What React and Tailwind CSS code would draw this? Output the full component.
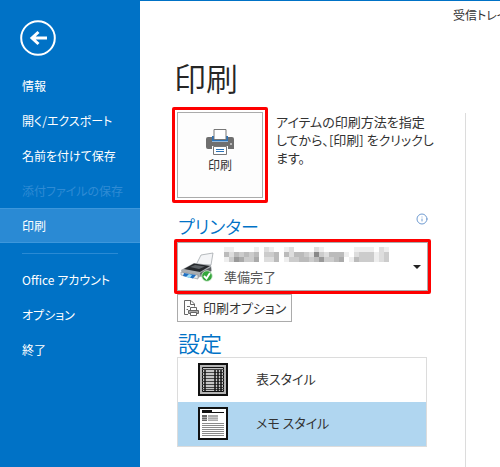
import React, { useState } from 'react';
import { Info } from 'lucide-react';

// --- DATA ---
const MAIN_ITEMS = [
  { id: 'info', label: '情報' },
  { id: 'open', label: '開く/エクスポート' },
  { id: 'save-as', label: '名前を付けて保存' },
  { id: 'save-attachments', label: '添付ファイルの保存', disabled: true },
  { id: 'print', label: '印刷' },
];

const APP_ITEMS = [
  { id: 'account', label: 'Office アカウント' },
  { id: 'options', label: 'オプション' },
  { id: 'exit', label: '終了' },
];

// Grey level of every tile that hides the printer name (hex digit, f = white)
const MOSAIC = [
  'eeffffefdeffedffffdeffffffeeeefde',
  'bdbcbcbfccbfbdbbcd8cdbbbefdcccedc',
  'ec9accafddbfeccbbcb9ccbafebcccedc',
];

// --- ICONS ---
const BackIcon = () => (
  <svg viewBox="0 0 36 36" className="size-9" fill="none" stroke="white" aria-hidden="true">
    <circle cx="18" cy="18" r="16.8" strokeWidth="2" />
    <path d="M27 18H12M18.500 12L12 18L18.500 24" strokeWidth="3" />
  </svg>
);

const PrinterIcon = () => (
  <svg viewBox="0 0 28 26" className="w-7 h-[26px]" aria-hidden="true">
    <path d="M2 8h4v5h16V8h4q2 0 2 2v10h-6v-3H6v3H2q-2 0-2-2V10q0-2 2-2z" fill="#6f6f6f" />
    <path d="M6 7h2v4h12V7h2v5.500H6z" fill="#2b73b8" />
    <path d="M8 .5h12V10.500h-12z" fill="white" stroke="#777" />
    <path d="M7.500 17.500h13v8h-13z" fill="white" stroke="#777" />
    <path d="M10 20.500h8M10 22.500h8" stroke="#2b73b8" />
    <path d="M24 15h2" stroke="white" />
  </svg>
);

const DeviceIcon = () => (
  <svg viewBox="0 0 34 30" className="w-[34px] h-[30px]" aria-hidden="true">
    <path d="M16 13L21 3L33 1L31 13z" fill="#f4f5f7" stroke="#a5a9ad" strokeWidth=".8" />
    <path d="M1 18L14 11L31 13L32 19L18 26L2 21z" fill="#a9adb1" />
    <path d="M4 17L14 11.500L30 14L20 20z" fill="#25282b" />
    <path d="M10 15L15 13L25 14.500L19 17z" fill="#5c6165" />
    <path d="M1 20L18 23L18 27L1 23z" fill="#e6eaed" stroke="#888" strokeWidth=".6" />
    <path d="M4 21L16 23L13 26.500L3 24z" fill="#1f6fc2" />
    <path d="M9 22L12 23L10 26L6 25z" fill="#9adcf7" />
    <path d="M20 21L31 15V19L21 25z" fill="#5a5e62" />
    <circle cx="27" cy="24" r="5.300" fill="#35a63c" stroke="#d8eed8" strokeWidth=".8" />
    <path d="M24 24L26.500 26.500L30 21" fill="none" stroke="white" strokeWidth="1.900" />
  </svg>
);

const PrintOptionsIcon = () => (
  <svg viewBox="0 0 16 16" className="size-4" fill="none" stroke="#666" aria-hidden="true">
    <path d="M5 14.500H1.500V.5H8L11.500 4V6.500M7.500 .5V4.500H11.500" />
    <path d="M4 6.500H7M3.500 9.500H5" />
    <path d="M7.500 10V7.500H13.500V10" fill="white" />
    <path d="M5.500 10.500H15.500V13.500H5.500z" fill="#aaa" />
    <path d="M7.500 12.500H13.500V15.500H7.500z" fill="white" />
  </svg>
);

const TableStyleIcon = () => (
  <svg viewBox="0 0 30 33" className="w-[30px] h-[33px]" aria-hidden="true">
    <path d="M1 1h28v31H1z" fill="#b5b5b5" stroke="#111" strokeWidth="2" />
    <path d="M4.500 4.500h21v24h-21z" fill="#c4c4c4" stroke="#111" />
    <path d="M4 6.500h22M4 9.500h22M4 12.500h22M4 15.500h22M4 18.500h22M4 21.500h22M4 24.500h22M4 26.500h22" stroke="#444" />
    <path d="M7 7v22M17 7v22M20 7v22M23 7v22" stroke="#111" strokeWidth="1.500" />
  </svg>
);

const MemoStyleIcon = () => (
  <svg viewBox="0 0 30 33" className="w-[30px] h-[33px]" aria-hidden="true">
    <path d="M1 1h28v31H1z" fill="white" stroke="#111" strokeWidth="2" />
    <path d="M4 4h10" stroke="#111" strokeWidth="2" />
    <path d="M4 5.500h22" stroke="#111" />
    <path d="M4 8h5v6H4z" fill="#666" />
    <path d="M10 8h10v6H10z" fill="#aaa" />
    <path d="M4 10.500h16M4 12.500h16" stroke="#ddd" strokeWidth=".6" />
    <path d="M4 16.500h22M4 18.500h22M4 20.500h22M4 22.500h22M4 24.500h22M4 26.500h22M4 28.500h22" stroke="#8a8a8a" />
  </svg>
);

const HiddenName = () => (
  <svg viewBox="0 0 165 15" className="w-[165px] h-[15px]" shapeRendering="crispEdges" aria-hidden="true">
    {MOSAIC.map((row, y) =>
      row.split('').map((tone, x) => (
        <rect key={`${x}-${y}`} x={x * 5} y={y * 5} width="5" height="5" fill={`#${tone.repeat(3)}`} />
      ))
    )}
  </svg>
);

// --- COMPONENTS ---
const NavItem = ({ item, active, onSelect }) => (
  <button
    type="button"
    disabled={item.disabled}
    onClick={() => onSelect(item.id)}
    className={`block w-full h-[35px] pl-[22px] text-left text-xs whitespace-nowrap border-y ${
      active ? 'bg-[#2a8ad4] border-[#3d97dc]' : 'border-transparent'
    } ${item.disabled ? 'text-[#2f8bd4]' : 'text-white'}`}
  >
    {item.label}
  </button>
);

const STYLES = [
  { id: 'table', label: '表スタイル', Icon: TableStyleIcon },
  { id: 'memo', label: 'メモ スタイル', Icon: MemoStyleIcon },
];

function App() {
  const [activeTab, setActiveTab] = useState('print');
  const [printStyle, setPrintStyle] = useState('memo');

  return (
    <div className="flex min-h-screen overflow-hidden bg-white text-[#333] font-['Noto_Sans_CJK_JP',sans-serif] [font-feature-settings:'palt']">
      {/* --- SIDEBAR --- */}
      <nav className="w-[140px] shrink-0 bg-[#0072c6]">
        <button type="button" aria-label="戻る" className="block ml-5 mt-5 mb-3">
          <BackIcon />
        </button>
        {MAIN_ITEMS.map((item) => (
          <NavItem key={item.id} item={item} active={activeTab === item.id} onSelect={setActiveTab} />
        ))}
        <hr className="mx-[22px] mt-2.5 mb-2 border-[#2a8ad4]" />
        {APP_ITEMS.map((item) => (
          <NavItem key={item.id} item={item} active={activeTab === item.id} onSelect={setActiveTab} />
        ))}
      </nav>

      {/* --- MAIN CONTENT --- */}
      <main className="flex-1 min-w-0 flex flex-col border-t border-[#0072c6]">
        <header className="h-[27px] pl-[313px] text-xs leading-[27px] whitespace-nowrap overflow-hidden">
          受信トレイ
        </header>

        <div className="flex flex-1 pl-8">
          <section className="w-[259px] shrink-0 pt-[25px]">
            <h1 className="pl-0.5 text-[32px] leading-12 font-[350] text-[#262626]">印刷</h1>

            <div className="flex gap-2 mt-1.5">
              <div className="shrink-0 border-3 border-[#fe0000] rounded-xs p-0.5">
                <button
                  type="button"
                  className="flex flex-col items-center justify-center gap-0.5 w-[86px] h-[86px] pb-2 border border-[#ababab] bg-[#fdfdfd] text-xs"
                >
                  <PrinterIcon />
                  印刷
                </button>
              </div>
              <p className="pt-1.5 text-[13px] leading-[18px] whitespace-nowrap">
                アイテムの印刷方法を指定
                <br />
                してから、[印刷] をクリックし
                <br />
                ます。
              </p>
            </div>

            <div className="flex items-start justify-between pl-1.5 pr-[3px] mt-2.5">
              <label htmlFor="printer" className="text-[18px] leading-[26px] font-[350] text-[#0072c6]">
                プリンター
              </label>
              <button type="button" aria-label="プリンター情報" className="text-[#6f9bd1]">
                <Info size={12} />
              </button>
            </div>

            <div className="ml-0.5 border-3 border-[#fe0000] rounded-xs">
              <div className="grid items-center border border-[#ababab] h-[49px]">
                <select
                  id="printer"
                  className="col-start-1 row-start-1 appearance-none w-full h-full pl-[46px] pt-5 text-[13px] text-[#555] bg-transparent"
                >
                  <option>準備完了</option>
                </select>
                <div className="col-start-1 row-start-1 flex items-center pl-0.5 pr-1.5 pointer-events-none">
                  <DeviceIcon />
                  <div className="flex-1 pl-2.5 pb-6">
                    <HiddenName />
                  </div>
                  <svg viewBox="0 0 8 4" className="w-2 h-1" aria-hidden="true">
                    <path d="M0 0h8L4 4z" fill="#222" />
                  </svg>
                </div>
              </div>
            </div>

            <button
              type="button"
              className="flex items-center gap-1 h-7 ml-[5px] px-[5px] border border-[#ababab] bg-[#fdfdfd] text-[13px] whitespace-nowrap"
            >
              <PrintOptionsIcon />
              印刷オプション
            </button>

            <h2 className="pl-1.5 mt-1.5 text-[22px] leading-7 font-[350] text-[#0072c6]">設定</h2>

            <div className="ml-[5px] mr-1 mt-px border border-[#dcdcdc]">
              {STYLES.map(({ id, label, Icon }) => (
                <button
                  key={id}
                  type="button"
                  aria-pressed={printStyle === id}
                  onClick={() => setPrintStyle(id)}
                  className={`flex items-center gap-7 w-full h-11 pl-5 pb-0.5 text-[13px] ${
                    printStyle === id ? 'bg-[#b0d6f0]' : 'bg-white'
                  }`}
                >
                  <Icon />
                  {label}
                </button>
              ))}
            </div>
          </section>

          {/* Preview pane */}
          <aside className="flex-1 ml-[34px] mt-[85px] border-l border-[#dcdcdc]" />
        </div>
      </main>
    </div>
  );
}

export default App;
